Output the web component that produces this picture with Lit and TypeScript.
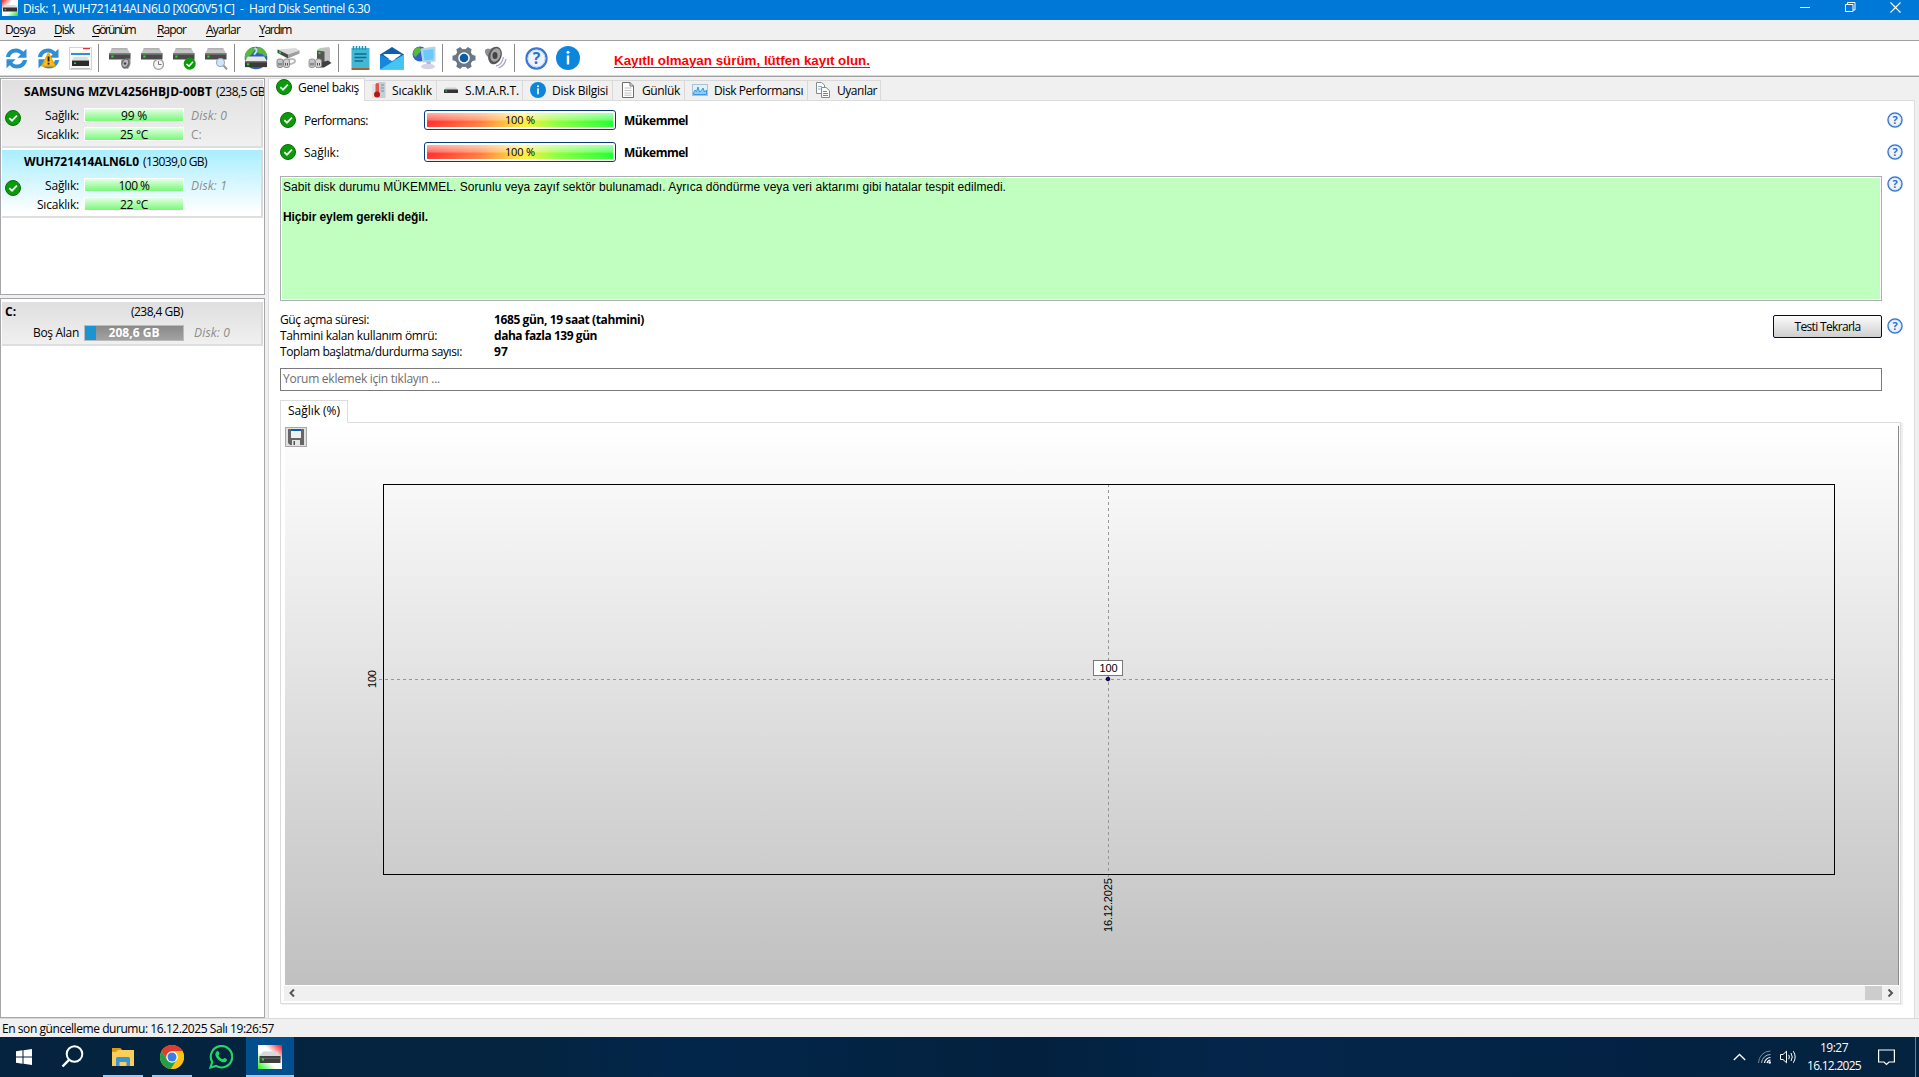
import { LitElement, html, svg, css, nothing } from "lit";
import { customElement, property } from "lit/decorators.js";

const UI = css`"Open Sans", "Noto Sans", sans-serif`;

/* Text run whose tracking is adjusted so that it occupies a known width. */
@customElement("fit-text")
class FitText extends LitElement {
  @property({ type: Number }) w = 0;
  static styles = css`
    :host { display: inline-block; white-space: pre; flex: none; }
    .run { display: inline-block; white-space: pre; }
  `;
  firstUpdated() {
    const run = this.renderRoot.querySelector(".run") as HTMLElement;
    const n = (this.textContent || "").length;
    if (this.w && n) {
      const natural = run.getBoundingClientRect().width;
      run.style.letterSpacing = `${(this.w - natural) / n}px`;
    }
  }
  render() {
    return html`<span class="run"><slot></slot></span>`;
  }
}

const check = (s = 16) => html`<svg width=${s} height=${s} viewBox="0 0 16 16">
  <circle cx="8" cy="8" r="7.5" fill="#0a9a0a" stroke="#057005" stroke-width="1"/>
  <path d="M4.3 8.2 7 10.7 11.9 5.7" fill="none" stroke="#fff" stroke-width="1.7"/></svg>`;

const help = (s = 16) => html`<svg width=${s} height=${s} viewBox="0 0 16 16">
  <circle cx="8" cy="8" r="7" fill="#fff" stroke="#3a78cf" stroke-width="1.5"/>
  <circle cx="8" cy="8" r="5.9" fill="#eef4fd" stroke="#b9d2f4" stroke-width=".6"/>
  <text x="8" y="12" text-anchor="middle" font-family="Open Sans, sans-serif" font-weight="700" font-size="11" fill="#2f6fd0">?</text></svg>`;

const info = (s = 16) => html`<svg width=${s} height=${s} viewBox="0 0 16 16">
  <circle cx="8" cy="8" r="8" fill="#0c86da"/>
  <rect x="7.2" y="6.3" width="1.6" height="6" fill="#fff"/><circle cx="8" cy="4.2" r="1" fill="#fff"/></svg>`;

const refreshArrows = svg`<g fill="#2f8fd6">
  <path d="M1 9.5C1.6 4.2 6 1 11 1c3.200 0 5.600 1.300 7.300 3.300L21.500 1.200V10.300H12.400L15.700 7C14.500 5.600 13 4.900 11 4.900 7.800 4.900 5.700 6.800 5 9.500Z"/>
  <path d="M22 12.500C21.400 17.800 17 21 12 21c-3.200 0-5.600-1.300-7.300-3.300L1.500 20.800V11.700H10.600L7.300 15c1.200 1.400 2.700 2.100 4.700 2.100 3.200 0 5.300-1.900 6-4.600Z"/></g>`;
const refresh = html`<svg width="23" height="23" viewBox="0 0 23 22">${refreshArrows}</svg>`;
const refreshWarn = html`<svg width="23" height="23" viewBox="0 0 23 22">${refreshArrows}
  <path d="M11.500 5.500 18 18.500H5Z" fill="#fdbf1c" stroke="#f0a80a" stroke-width="1.500" stroke-linejoin="round"/>
  <rect x="10.600" y="9" width="1.900" height="5" fill="#222"/><rect x="10.600" y="15.200" width="1.900" height="1.900" fill="#222"/></svg>`;
const windowDrive = html`<svg width="23" height="23" viewBox="0 0 23 23">
  <rect x=".5" y=".5" width="22" height="22" fill="#f6f6f6" stroke="#d4d4d4"/><rect x="1" y="1" width="21" height="3" fill="#fff"/>
  <rect x="14" y="1" width="7" height="1.200" fill="#d33"/><rect x="2" y="6" width="19" height="2" fill="#2f8fd6"/>
  <path d="M5 10h13l2 3H3Z" fill="#ddd"/><rect x="3" y="13.500" width="17" height="5.500" fill="#2b2b2b"/><rect x="5" y="15.500" width="2" height="1.500" fill="#2d2"/><path d="M2 21.500h19" stroke="#bbb"/></svg>`;

const drive = svg`<path d="M3 1H18L21.500 7H0Z" fill="#c4c4c4"/><path d="M3 1H18L18.800 2.500H2Z" fill="#b0b0b0"/>
  <rect x="0" y="6.500" width="21.500" height="6" fill="#4a4a4a"/><rect x="0" y="6.500" width="21.500" height="1.200" fill="#777"/><rect x="2.300" y="8.500" width="2.200" height="2" fill="#24e024"/>`;
const driveWith = (badge: unknown) => html`<svg width="23" height="23" viewBox="0 0 23 23">${drive}${badge}</svg>`;
const badgeSpeaker = svg`<path d="M12 13.500 15 12 21 11.500Q23 17 19 22L14 20Q11.500 17 12 13.500Z" fill="#8f8f96"/><ellipse cx="16.500" cy="16.500" rx="4" ry="5.300" fill="#6a6a6e" transform="rotate(20 16.500 16.500)"/><ellipse cx="16.300" cy="16.300" rx="2.600" ry="3.800" fill="#b9b9bd" transform="rotate(20 16.300 16.300)"/><circle cx="16" cy="16.500" r="1.300" fill="#444"/>`;
const badgeClock = svg`<circle cx="17.500" cy="17.300" r="5" fill="#f5f5f5" stroke="#9b9b9b" stroke-width="1.200"/><path d="M17.500 14V17.500H20.500" fill="none" stroke="#777"/>`;
const badgeCheck = svg`<circle cx="16.700" cy="16.800" r="6" fill="#0a9a0a"/><path d="M13.500 17 16 19.200 20 14.800" fill="none" stroke="#fff" stroke-width="1.600"/>`;
const badgeLens = svg`<circle cx="15.500" cy="15.500" r="4" fill="#cfe6fa" stroke="#9ab" stroke-width="1.100"/><path d="M18.500 18.500 22 22.500" stroke="#999" stroke-width="2"/>`;

const globeDrive = html`<svg width="24" height="24" viewBox="0 0 25 24">
  <circle cx="12.500" cy="12" r="11.800" fill="#2a62b8"/><path d="M3 5C6 1 10 0 11.500 2 12 5 8 6 7.500 9 5 9 5 12 2 14 0 10 1 7 3 5ZM15 .5c5 1 8 4 9 9-2 2-4 0-5-2-3 1-5-1-6-3-1-2 0-3 2-4Z" fill="#5cb838"/><path d="M11 1.500Q14 3 12.500 6L10.500 8.500" stroke="#bfe0ff" stroke-width="2" fill="none"/>
  <path d="M4 10.500H21L24 15.500H1Z" fill="#e6e6e6"/><rect x="1" y="15.500" width="23" height="6" fill="#3b3b3b"/><path d="M1 16H24" stroke="#888"/><rect x="3" y="17.500" width="2.400" height="2" fill="#24e024"/></svg>`;
const driveCable = html`<svg width="24" height="24" viewBox="0 0 24 24">
  <path d="M1.500 3.500 20 2 23.500 4.500 12 8.500Z" fill="#dadada"/><path d="M1.500 3.500 12 8.500V12.500L1.500 7Z" fill="#4a4a4a"/><path d="M12 8.500 23.500 4.500V7.500L12 12.500Z" fill="#9e9e9e"/><rect x="3" y="5.500" width="2" height="2" fill="#24e024"/>
  <path d="M13 13.500q5-1.500 6 1t-6 4" fill="none" stroke="#bbb" stroke-width="2"/>
  <rect x="1" y="13" width="6" height="8.500" rx="2" fill="#c4c4c4" stroke="#777" stroke-width=".8"/><rect x="7.500" y="13" width="6" height="8.500" rx="2" fill="#cfcfcf" stroke="#777" stroke-width=".8"/><path d="M3 17v2.500M5 17v2.500M9.500 17v2.500M11.500 17v2.500" stroke="#555"/></svg>`;
const driveStand = html`<svg width="24" height="24" viewBox="0 0 24 24">
  <path d="M9 4 12 2 21 1 22 3V16L17 18Z" fill="#c2c2c2"/><path d="M9 4.500 16.500 5.500V18L9 16Z" fill="#555"/><rect x="10.500" y="6" width="2" height="2" fill="#24e024"/><path d="M8 18 20 14.500 23.500 17 16 21.500H8Z" fill="#3f3f3f"/>
  <rect x="1" y="13" width="6" height="8.500" rx="2" fill="#c4c4c4" stroke="#888" stroke-width=".8"/><rect x="7.500" y="13" width="6" height="8.500" rx="2" fill="#d4d4d4" stroke="#888" stroke-width=".8"/><path d="M3 17v2.500M5 17v2.500M9.500 17v2.500M11.500 17v2.500" stroke="#555"/></svg>`;
const notepad = html`<svg width="19" height="24" viewBox="0 0 19 24">
  <rect x=".5" y="2" width="18" height="20" fill="#41b8d8"/><rect x=".5" y="22" width="18" height="2" fill="#a8622c"/><path d="M2.500 0v4M5.500 0v4M8.500 0v4M11.500 0v4M14.500 0v4" stroke="#2592b4" stroke-width="1.500"/>
  <path d="M3.500 8H15.500M3.500 11.500H15.500M3.500 15H12" stroke="#136a88" stroke-width="1.500"/></svg>`;
const mail = html`<svg width="24" height="23" viewBox="0 0 24 23">
  <path d="M0 7.500 12 0 24 7.500V12H0Z" fill="#0f5ea8"/><path d="M3 7.500H21.500L12 14Z" fill="#fff"/><path d="M0 7.500 12 14 24 7.500V22.500H0Z" fill="#1488dc"/><path d="M0 22.500 24 7.500V22.500Z" fill="#45c4f2"/><path d="M3.500 7H20.500L12 12.800Z" fill="#fff"/></svg>`;
const network = html`<svg width="24" height="24" viewBox="0 0 24 24">
  <circle cx="8" cy="8" r="7.500" fill="#2c66c2"/><path d="M2 4c3-4 7-3 7 0S5 8 4 11C1 10 1 7 2 4Z" fill="#5db83a"/>
  <path d="M9 3 23 1V15L11 16Z" fill="#9fdcfb" stroke="#c4cce0"/><path d="M11 4.500 21.500 3V13.500L12.500 14.500Z" fill="#6cc8f8"/><path d="M14.500 15.500h4l1 4h-5Z" fill="#b5b3d4"/><ellipse cx="16" cy="20.500" rx="7" ry="2.800" fill="#d5d4e6"/></svg>`;
const gear = html`<svg width="24" height="24" viewBox="0 0 24 24">
  <g fill="#6b7885"><circle cx="12" cy="12" r="9"/>${[0, 60, 120].map(a => svg`<path d="M8.800 4 9.800 .5H14.200L15.200 4V20L14.200 23.500H9.800L8.800 20Z" transform=${`rotate(${a + 30} 12 12)`}/>`)}</g>
  <circle cx="12" cy="12" r="5.800" fill="#fff"/><circle cx="12" cy="12" r="4.300" fill="#0d5aa7"/></svg>`;
const speaker = html`<svg width="24" height="24" viewBox="0 0 24 24">
  <path d="M1 4Q3 1.500 6 3L10 1 9 14 4 11Q.5 8 1 4Z" fill="#8d8d92"/><ellipse cx="11" cy="9.500" rx="6.500" ry="9" fill="#55555a" transform="rotate(20 11 9.500)"/>
  <ellipse cx="11.500" cy="9" rx="4.800" ry="7" fill="#a5a5a5" transform="rotate(20 11.500 9)"/><ellipse cx="11" cy="9.500" rx="2.500" ry="3.500" fill="#444"/>
  <path d="M12 20q6-1 7.500-9M14.500 22q6-2 7.500-9" fill="none" stroke="#aaa8bf" stroke-width="1.300"/></svg>`;

const thermo = html`<svg width="16" height="16" viewBox="0 0 16 16"><rect x="7" y="0" width="7.500" height="16" fill="#c3ced7"/><rect x="1" y="2" width="5" height="14" fill="#e6e2e2"/>
  <rect x="4.500" y="1" width="3.500" height="10" rx="1.500" fill="#e0554b"/><circle cx="6" cy="12.500" r="3" fill="#b3170f"/><path d="M10 3h3M10 6h3M10 9h3" stroke="#7d8f9e"/></svg>`;
const smart = html`<svg width="16" height="16" viewBox="0 0 16 16"><path d="M3 5.500H13L15 8H1Z" fill="#cfcfcf"/><rect x="1" y="7.500" width="14" height="3.500" rx=".5" fill="#333"/><rect x="2.500" y="8.500" width="1.600" height="1.200" fill="#2d2"/></svg>`;
const doc = html`<svg width="16" height="16" viewBox="0 0 16 16"><path d="M2.500 .5H10L13.500 4V15.500H2.500Z" fill="#fff" stroke="#6d6d6d"/><path d="M10 .5V4H13.500" fill="none" stroke="#6d6d6d"/><path d="M4.500 6H11.500M4.500 8.500H11.500M4.500 11H11.500M4.500 13.200H11.500" stroke="#b0b0b0" stroke-width=".8"/></svg>`;
const perf = html`<svg width="16" height="16" viewBox="0 0 16 16"><rect x=".5" y="2.500" width="15" height="11" fill="#dff1fc" stroke="#a9c3d6"/><path d="M1.500 11 3 8 4.500 9.500 6 5 7.500 10 9.500 8.500 11 6 12.500 10 14.500 8V12.500H1.500Z" fill="#8ccdf5" stroke="#2d8fdc" stroke-width=".9"/></svg>`;
const copies = html`<svg width="16" height="16" viewBox="0 0 16 16"><path d="M1.500 .5H6.500L9.500 3V11.500H1.500Z" fill="#fff" stroke="#8a8a8a"/><path d="M3 4.500H7M3 7H7" stroke="#8ab4e8"/><path d="M6.500 5.500H11L14.500 8.500V15.500H6.500Z" fill="#fff" stroke="#8a8a8a"/><path d="M8 9.500H12M8 11.500H13M8 13.500H13" stroke="#4a90e0"/></svg>`;

const appIcon = (s: number, id: string) => html`<svg width=${s} height=${s} viewBox="0 0 24 24">
  <defs><linearGradient id=${id} x1="0" y1="1" x2="1" y2="0"><stop offset="0" stop-color="#1ff01f"/><stop offset=".4" stop-color="#fff"/><stop offset=".62" stop-color="#fff"/><stop offset="1" stop-color="#ff1010"/></linearGradient></defs>
  <rect width="24" height="24" fill=${`url(#${id})`}/><path d="M5 6.500H19L22.500 11H1.500Z" fill="#d5d8dc"/><rect x="1.500" y="11" width="21" height="7" fill="#3d3d3d"/><rect x="1.500" y="12.800" width="21" height="1" fill="#666"/><rect x="4" y="13.500" width="2" height="2" fill="#20e020"/></svg>`;

const titleIcon = html`<svg width="16" height="16" viewBox="0 0 16 16">
  <defs><linearGradient id="ti" x1="0" y1="0" x2="1" y2="1"><stop offset="0" stop-color="#ff2020"/><stop offset=".35" stop-color="#fff"/><stop offset=".6" stop-color="#fff"/><stop offset="1" stop-color="#20e020"/></linearGradient></defs>
  <rect width="16" height="16" fill="url(#ti)"/><path d="M3 5H13L15 8H1Z" fill="#ddd"/><rect x="1" y="7.500" width="14" height="4" fill="#333"/><rect x="2.500" y="9" width="1.500" height="1.200" fill="#2d2"/></svg>`;

@customElement("title-menu")
class TitleMenu extends LitElement {
  static styles = css`
    :host { display: block; font: 12px/17px ${UI}; }
    .title { height: 20px; background: #0078d7; color: #fff; display: flex; align-items: flex-start; }
    .icon { margin-left: 2px; display: flex; }
    .name { margin: 0 auto 0 5px; }
    .win { display: flex; margin-right: 18px; gap: 34px; padding-top: 2px; }
    .menu { height: 21px; box-sizing: border-box; background: #f0f0f0; border-bottom: 1px solid #a0a0a0; display: flex; gap: 19px; padding: 1px 0 0 5px; color: #000; }
    .mg { margin-left: -1px; } .mr { margin-left: 3px; } .ma { margin-left: 1px; }
    u { text-underline-offset: 1.500px; }
  `;
  render() {
    return html`
      <div class="title"><span class="icon">${titleIcon}</span>
        <fit-text class="name" w="347">Disk: 1, WUH721414ALN6L0 [X0G0V51C]  -  Hard Disk Sentinel 6.30</fit-text>
        <div class="win">
          <svg width="11" height="11"><path d="M0 5.500H10" stroke="#fff"/></svg>
          <svg width="11" height="11"><path d="M.5 2.500H8V9.500H.5ZM2.500 2V.5H10V8H8" fill="none" stroke="#fff"/></svg>
          <svg width="11" height="11"><path d="M.5 .5 10.500 10.500M10.500 .5 .5 10.500" stroke="#fff" stroke-width="1.100"/></svg>
        </div></div>
      <div class="menu">
        <fit-text w="30">D<u>o</u>sya</fit-text><fit-text w="20"><u>D</u>isk</fit-text>
        <fit-text class="mg" w="43"><u>G</u>örünüm</fit-text><fit-text class="mr" w="29"><u>R</u>apor</fit-text>
        <fit-text class="ma" w="34"><u>A</u>yarlar</fit-text><fit-text w="32"><u>Y</u>ardım</fit-text>
      </div>`;
  }
}

@customElement("tool-bar")
class ToolBar extends LitElement {
  static styles = css`
    :host { display: flex; align-items: flex-start; height: 35px; box-sizing: border-box; background: #fff; border-bottom: 1px solid #d9d9d9; box-shadow: 0 1px #a0a0a0; margin-bottom: 1px; padding: 5px 0 0 4px; position: relative; }
    .grp { display: flex; gap: 8px; }
    .cell { width: 24px; height: 24px; display: flex; align-items: center; justify-content: center; }
    .sep { width: 1px; height: 28px; background: #8a8a8a; margin: -2px 9px 0 6px; }
    .reg { margin-left: 34px; font: bold 13.330px/16px "Liberation Sans", Arial, sans-serif; color: #f00; padding-top: 7px; }
    .reg u { text-underline-offset: 1.500px; text-decoration-thickness: 1px; }
  `;
  render() {
    const groups = [
      [refresh, refreshWarn, windowDrive],
      [driveWith(badgeSpeaker), driveWith(badgeClock), driveWith(badgeCheck), driveWith(badgeLens)],
      [globeDrive, driveCable, driveStand],
      [notepad, mail, network],
      [gear, speaker],
      [help(23), info(24)],
    ];
    return html`${groups.map((g, i) => html`${i ? html`<div class="sep"></div>` : nothing}
      <div class="grp">${g.map(ic => html`<div class="cell">${ic}</div>`)}</div>`)}
      <div class="reg"><fit-text w="256"><u>Kayıtlı olmayan sürüm, lütfen kayıt olun.</u></fit-text></div>`;
  }
}

@customElement("disk-list")
class DiskList extends LitElement {
  static styles = css`
    :host { display: flex; flex-direction: column; gap: 3px; width: 265px; padding-top: 1px; box-sizing: border-box; font: 12px/17px ${UI}; flex: none; }
    .panel { border: 1px solid #a6a6aa; background: #fff; box-sizing: border-box; padding: 1px 1px 0; overflow: hidden; }
    .disks { height: 217px; } .vols { height: 720px; padding-top: 3px; }
    .row { height: 68px; box-sizing: border-box; margin-bottom: 2px; border-bottom: 2px solid #dedede; border-right: 2px solid #dadada; background: linear-gradient(#dfdfdf, #f0f0f0); display: flex; }
    .sel { background: linear-gradient(#a9eeff, #fff 95%); }
    .st { width: 22px; padding: 30px 0 0 3px; box-sizing: border-box; flex: none; }
    .info { display: flex; flex-direction: column; padding-top: 3px; }
    .head { display: flex; gap: 4px; height: 24px; white-space: pre; }
    .line { display: flex; height: 20px; }
    .lab { width: 55px; display: flex; justify-content: flex-end; }
    .bar { margin: 1px 0 0 5px; width: 100px; height: 14px; box-sizing: border-box; border: 1px solid #fff; background: linear-gradient(#e4ffe4, #78f878); display: flex; justify-content: center; line-height: 13px; }
    .ex { margin-left: 7px; color: #8c8c8c; } .it { font-style: italic; }
    b { font-weight: 700; }
    .vol { height: 44px; flex-direction: column; padding-top: 1px; }
    .vh { display: flex; justify-content: space-between; width: 178px; padding-left: 3px; height: 22px; }
    .vl { width: 77px; display: flex; justify-content: flex-end; }
    .cap { margin-left: 5px; margin-top: 1px; width: 100px; height: 16px; box-sizing: border-box; border: 1px solid #bbb; background: linear-gradient(90deg, #1c94d2 11px, transparent 11px), linear-gradient(#8a8a8a, #a2a2a2); color: #fff; font-weight: 700; display: flex; justify-content: center; line-height: 15px; }
    .bar { line-height: 15px; }
    .bar fit-text, .cap fit-text { margin-top: -1px; }
    .ex2 { margin-left: 10px; }
    svg { display: block; }
  `;
  disk(name: string, nw: number, size: string, sw: number, hp: string, hw: number, temp: string, d: string, c: string, sel = false) {
    return html`<div class="row ${sel ? "sel" : ""}"><div class="st">${check()}</div><div class="info">
      <div class="head"><fit-text w=${nw}><b>${name}</b></fit-text><fit-text w=${sw}>${size}</fit-text></div>
      <div class="line"><span class="lab"><fit-text w="34">Sağlık:</fit-text></span><div class="bar"><fit-text w=${hw}>${hp}</fit-text></div><fit-text class="ex it" w="36">${d}</fit-text></div>
      <div class="line"><span class="lab"><fit-text w="42">Sıcaklık:</fit-text></span><div class="bar"><fit-text w="28">${temp}</fit-text></div><span class="ex">${c}</span></div>
    </div></div>`;
  }
  render() {
    return html`<div class="panel disks">
        ${this.disk("SAMSUNG MZVL4256HBJD-00BT", 188, "(238,5 GB)", 52, "99 %", 26, "25 °C", "Disk: 0", "C:")}
        ${this.disk("WUH721414ALN6L0", 115, "(13039,0 GB)", 64, "100 %", 31, "22 °C", "Disk: 1", "", true)}
      </div>
      <div class="panel vols"><div class="row vol">
        <div class="vh"><b>C:</b><fit-text w="52">(238,4 GB)</fit-text></div>
        <div class="line"><span class="vl"><fit-text w="46">Boş Alan</fit-text></span><div class="cap"><fit-text w="51">208,6 GB</fit-text></div><fit-text class="ex ex2 it" w="36">Disk: 0</fit-text></div>
      </div></div>`;
  }
}

@customElement("health-chart")
class HealthChart extends LitElement {
  static styles = css`
    :host { display: block; }
    svg { display: block; }
    .t { font-family: "Liberation Sans", Arial, sans-serif; font-size: 11px; fill: #000; }
  `;
  render() {
    return html`<svg width="1614" height="561" viewBox="0 0 1614 561">
      <defs><linearGradient id="bg" x1="0" y1="0" x2="0" y2="1"><stop offset="0" stop-color="#fff"/><stop offset="1" stop-color="#c0c0c0"/></linearGradient></defs>
      <rect width="1613" height="561" fill="url(#bg)"/>
      <path d="M94 255.500H1549.500M823.500 60V454" stroke="#969696" stroke-dasharray="3 3" fill="none"/>
      <rect x="98.500" y="60.500" width="1451" height="390" fill="none" stroke="#000"/>
      <rect x="808.500" y="236.500" width="29" height="15" fill="#fff" stroke="#000" stroke-dasharray="1 1"/>
      <text class="t" x="823.500" y="248" text-anchor="middle" textLength="18">100</text>
      <circle cx="823" cy="255" r="1.800" fill="#0000d8" stroke="#000"/>
      <text class="t" transform="translate(91 264) rotate(-90)" textLength="18">100</text>
      <text class="t" transform="translate(827 508) rotate(-90)" textLength="54">16.12.2025</text>
      <path d="M1613.500 2V561" stroke="#8a8a8a"/>
    </svg>`;
  }
}

@customElement("main-view")
class MainView extends LitElement {
  static styles = css`
    :host { display: flex; flex-direction: column; width: 1647px; margin-left: 3px; font: 12px/17px ${UI}; flex: none; }
    .tabs { display: flex; height: 23px; align-items: flex-end; flex: none; }
    .tab { height: 20px; box-sizing: border-box; background: #f0f0f0; border: 1px solid #d9d9d9; border-left: 0; border-bottom: 0; display: flex; align-items: flex-start; padding: 1px 0 0 7px; flex: none; }
    .tab .tx { margin-left: 6px; }
    .act { height: 23px; margin-bottom: -1px; width: 97px; background: #fff; border: 1px solid #dcdcdc; border-bottom: 0; padding: 0 0 0 7px; position: relative; }
    .w1 { width: 72px; padding-left: 6px; } .w1 .tx { margin-left: 5px; } .w2 { width: 86px; padding-left: 6px; } .w3 { width: 90px; } .w4 { width: 72px; } .w5 { width: 123px; } .w6 { width: 73px; }
    .page { flex: 1; background: #fff; border: 1px solid #dcdcdc; border-bottom: 0; padding: 3px 11px 0 11px; display: flex; flex-direction: column; box-sizing: border-box; }
    .metric { height: 32px; display: flex; align-items: center; }
    .lab { margin-left: 8px; width: 120px; padding-top: 1px; }
    .meter { width: 192px; height: 20px; box-sizing: border-box; border: 1px solid #0a3a78; border-radius: 3px; padding: 2px; }
    .fill { height: 100%; background: linear-gradient(rgba(255,255,255,.62), rgba(255,255,255,.3) 48%, rgba(255,255,255,0) 62%, rgba(255,255,255,.08)), linear-gradient(90deg, #ff2c2c, #ff7a3c 28%, #fff03a 52%, #8cff3c 70%, #22ff30); display: flex; align-items: center; justify-content: center; font: 11px/14px "Open Sans", sans-serif; }
    .val { margin-left: 8px; margin-right: auto; padding-top: 1px; }
    .val, .sval { font-weight: 700; }
    svg { display: block; flex: none; }
    .msgrow { display: flex; gap: 5px; margin-top: 8px; }
    .msg { flex: 1; height: 125px; box-sizing: border-box; border: 1px solid #acacb2; padding: 1px; }
    .msgin { height: 100%; box-sizing: border-box; background: #c0ffc0; padding: 2px 0 0 1px; font: 12px/15px "Liberation Sans", Arial, sans-serif; display: flex; flex-direction: column; gap: 15px; }
    .statrow { display: flex; margin-top: 10px; height: 48px; }
    .labels { width: 214px; } .values { margin-right: auto; } .labels fit-text, .values fit-text { display: block; height: 16px; }
    .btn { width: 109px; height: 23px; box-sizing: border-box; margin: 4px 5px 0 0; border: 1px solid #000080; border-radius: 2px; background: linear-gradient(#fbfbfb, #cfcfcf); display: flex; justify-content: center; padding-top: 2px; }
    .bh { margin-top: 7px; }
    .comment { margin: 9px 21px 0 0; height: 23px; flex: none; border: 1px solid #7a7a7a; box-sizing: border-box; color: #6d6d6d; padding: 1px 0 0 2px; }
    .sub { margin-top: 9px; height: 22px; flex: none; display: flex; }
    .subtab { width: 68px; height: 23px; box-sizing: border-box; border: 1px solid #dcdcdc; border-bottom: 0; background: #fff; position: relative; z-index: 1; padding: 1px 0 0 7px; }
    .chart { margin-right: 2px; height: 582px; flex: none; box-sizing: border-box; border: 1px solid #dcdcdc; box-shadow: 1px 1px #f0f0f0, 2px 1px #f0f0f0; padding: 1px 1px 0 4px; position: relative; }
    .save { position: absolute; left: 4px; top: 4px; width: 22px; height: 20px; box-sizing: border-box; border: 1px solid #a8a8a8; background: #e1e1e1; display: flex; align-items: center; justify-content: center; }
    .scroll { margin: 1px 0 0 -1px; height: 15px; box-sizing: border-box; background: #f0f0f0; display: flex; align-items: flex-start; padding: 0 5px; }
    .scroll svg { margin-top: 3px; }
    .thumb { width: 17px; height: 14px; background: #cdcdcd; margin: 0 5px 0 auto; }
  `;
  render() {
    return html`
      <div class="tabs">
        <div class="tab act">${check()}<fit-text class="tx" w="61">Genel bakış</fit-text></div>
        <div class="tab w1">${thermo}<fit-text class="tx" w="40">Sıcaklık</fit-text></div>
        <div class="tab w2">${smart}<fit-text class="tx" w="54">S.M.A.R.T.</fit-text></div>
        <div class="tab w3">${info()}<fit-text class="tx" w="56">Disk Bilgisi</fit-text></div>
        <div class="tab w4">${doc}<fit-text class="tx" w="38">Günlük</fit-text></div>
        <div class="tab w5">${perf}<fit-text class="tx" w="89">Disk Performansı</fit-text></div>
        <div class="tab w6">${copies}<fit-text class="tx" w="40">Uyarılar</fit-text></div>
      </div>
      <div class="page">
        ${[["Performans:", 64], ["Sağlık:", 35]].map(([l, w]) => html`<div class="metric">${check()}<span class="lab"><fit-text w=${w}>${l}</fit-text></span>
          <div class="meter"><div class="fill"><fit-text w="30">100 %</fit-text></div></div><fit-text class="val" w="64">Mükemmel</fit-text>${help()}</div>`)}
        <div class="msgrow"><div class="msg"><div class="msgin">
          <fit-text w="723">Sabit disk durumu MÜKEMMEL. Sorunlu veya zayıf sektör bulunamadı. Ayrıca döndürme veya veri aktarımı gibi hatalar tespit edilmedi.</fit-text>
          <fit-text w="145"><b>Hiçbir eylem gerekli değil.</b></fit-text>
        </div></div>${help()}</div>
        <div class="statrow">
          <div class="labels"><fit-text w="89">Güç açma süresi:</fit-text><fit-text w="157">Tahmini kalan kullanım ömrü:</fit-text><fit-text w="182">Toplam başlatma/durdurma sayısı:</fit-text></div>
          <div class="values sval"><fit-text w="150">1685 gün, 19 saat (tahmini)</fit-text><fit-text w="103">daha fazla 139 gün</fit-text><fit-text w="14">97</fit-text></div>
          <div class="btn"><fit-text w="66">Testi Tekrarla</fit-text></div><span class="bh">${help()}</span>
        </div>
        <div class="comment"><fit-text w="157">Yorum eklemek için tıklayın ...</fit-text></div>
        <div class="sub"><div class="subtab"><fit-text w="52">Sağlık (%)</fit-text></div></div>
        <div class="chart"><health-chart></health-chart>
          <div class="save"><svg width="16" height="16" viewBox="0 0 16 16"><path d="M0 0H16V16H2L0 14Z" fill="#666"/><rect x="3" y="0" width="10" height="2" fill="#0a5fb8"/><rect x="3" y="2" width="10" height="7" fill="#f0f0f0"/><rect x="4" y="11" width="8" height="5" fill="#e6e6e6"/><rect x="5.500" y="12" width="1.500" height="4" fill="#555"/></svg></div>
          <div class="scroll"><svg width="6" height="8"><path d="M5 .5 1.500 4 5 7.500" fill="none" stroke="#555" stroke-width="2"/></svg><div class="thumb"></div>
            <svg width="7" height="8"><path d="M1.500 .5 5 4 1.500 7.500" fill="none" stroke="#555" stroke-width="2"/></svg></div>
        </div>
      </div>`;
  }
}

@customElement("task-bar")
class TaskBar extends LitElement {
  static styles = css`
    :host { display: flex; height: 40px; background: linear-gradient(90deg, #05233f 0, #042440 28%, #02264b 36%, #032342 46%, #03213f 54%, #04264a 64%, #042548 74%, #032243 85%, #04233f); color: #fff; font: 12px/18px ${UI}; flex: none; }
    .cell { width: 49px; height: 40px; box-sizing: border-box; display: flex; align-items: center; justify-content: center; flex: none; }
    .start { width: 48px; } .search { width: 50px; }
    .run { background: linear-gradient(#99ccf5, #99ccf5) center bottom / 40px 2px no-repeat; }
    .on { width: 48px; margin-left: 1px; background: linear-gradient(#99ccf5, #99ccf5) center bottom / 48px 2px no-repeat #034f8d; }
    .tray { margin-left: auto; display: flex; align-items: center; }
    .clock { width: 56px; text-align: center; margin: 0 16px 0 9px; }
    .clock fit-text { display: block; }
    .desk { width: 3px; height: 40px; border-left: 1px solid #6a7f93; margin-left: 20px; }
    .wf { margin-left: 12px; } .sp { margin-left: 9px; }
    svg { display: block; }
  `;
  render() {
    return html`
      <div class="cell start"><svg width="16" height="16"><path d="M0 2.300 6.500 1.300V7.500H0ZM7.500 1.200 16 0V7.500H7.500ZM0 8.500H6.500V14.700L0 13.700ZM7.500 8.500H16V16L7.500 14.800Z" fill="#fff"/></svg></div>
      <div class="cell search"><svg width="24" height="24" viewBox="0 0 24 24"><circle cx="13.500" cy="9" r="7.800" fill="none" stroke="#fff" stroke-width="2"/><path d="M8 14.800 1.500 21.500" stroke="#fff" stroke-width="2.400"/></svg></div>
      <div class="cell run"><svg width="22" height="20" viewBox="0 0 22 20"><path d="M0 1H8L10 3H22V19H0Z" fill="#f9cf5a"/><path d="M0 1H8L10 3H6L4 5H0Z" fill="#e09a10"/><path d="M4 19V11.500Q4 10 5.500 10H16.500Q18 10 18 11.500V19H14.500V15H7.500V19Z" fill="#3a94d8"/></svg></div>
      <div class="cell run"><svg width="24" height="24" viewBox="0 0 24 24"><circle cx="12" cy="12" r="12" fill="#fbc116"/><path d="M1.600 6A12 12 0 0 1 22.400 6H12L7 14.500Z" fill="#e33b2e"/><path d="M1.600 6A12 12 0 0 0 11 23.960L16.500 15 7.200 14.900Z" fill="#22a046"/><path d="M22.400 6A12 12 0 0 1 11 23.960L17 14.500 15 6Z" fill="#fbc116"/><circle cx="12" cy="12" r="5.800" fill="#fff"/><circle cx="12" cy="12" r="4.500" fill="#3b7de8"/></svg></div>
      <div class="cell"><svg width="24" height="24" viewBox="0 0 24 24"><path d="M1.500 22.500 3.200 17A10.700 10.700 0 1 1 7 20.900Z" fill="none" stroke="#25d366" stroke-width="2.200"/><path d="M8 6.300C8.600 5.900 9.300 6 9.600 6.600L10.400 8.600C10.600 9.200 9.600 10 9.500 10.400 10.400 12.200 11.800 13.500 13.800 14.200 14.500 13.900 15 12.700 15.500 12.900L17.800 14C18.300 14.400 17.800 16 17 16.700 15 18 12.300 17 10 15.200 8.200 13.700 6.300 11.300 6.300 9.200 6.300 8 7.200 6.800 8 6.300Z" fill="#25d366"/></svg></div>
      <div class="cell on">${appIcon(24, "tb")}</div>
      <div class="tray">
        <svg width="13" height="8"><path d="M.8 7 6.500 1.500 12.200 7" fill="none" stroke="#fff" stroke-width="1.300"/></svg>
        <svg class="wf" width="13" height="14" viewBox="0 0 13 14"><g fill="none"><path d="M.5 13A12 12 0 0 1 12.500 1" stroke="#73879a"/><path d="M3.500 13A9 9 0 0 1 12.500 4.500" stroke="#aab6c2"/><path d="M6.500 13A6 6 0 0 1 12.500 7.500M9 13A4 4 0 0 1 12.500 10" stroke="#fff" stroke-width="1.200"/></g><circle cx="11.700" cy="12.500" r="1.200" fill="#fff"/></svg>
        <svg class="sp" width="17" height="14" viewBox="0 0 17 14"><g fill="none" stroke="#fff"><path d="M.5 4.500H3L6.500 1.200V12.800L3 9.500H.5Z"/><path d="M8.700 4.800Q10 7 8.700 9.200M11 3Q13.500 7 11 11M13.300 1.200Q17 7 13.300 12.800"/></g></svg>
        <div class="clock"><fit-text w="28">19:27</fit-text><fit-text w="54">16.12.2025</fit-text></div>
        <svg width="17" height="17" viewBox="0 0 17 17"><path d="M.6 1H16.400V13H11L8.500 15.500 6 13H.6Z" fill="none" stroke="#fff" stroke-width="1.200"/></svg>
        <div class="desk"></div>
      </div>`;
  }
}

@customElement("app-root")
class AppRoot extends LitElement {
  static styles = css`
    :host { display: flex; flex-direction: column; width: 1919px; height: 1077px; background: #f0f0f0; overflow: hidden; color: #000; }
    title-menu, tool-bar { flex: none; }
    .body { display: flex; height: 941px; flex: none; }
    .status { height: 19px; box-sizing: border-box; border-top: 1px solid #d9d9d9; padding: 1px 0 0 2px; font: 12px/17px ${UI}; flex: none; }
  `;
  render() {
    return html`<title-menu></title-menu><tool-bar></tool-bar>
      <div class="body"><disk-list></disk-list><main-view></main-view></div>
      <div class="status"><fit-text w="272">En son güncelleme durumu: 16.12.2025 Salı 19:26:57</fit-text></div>
      <task-bar></task-bar>`;
  }
}
